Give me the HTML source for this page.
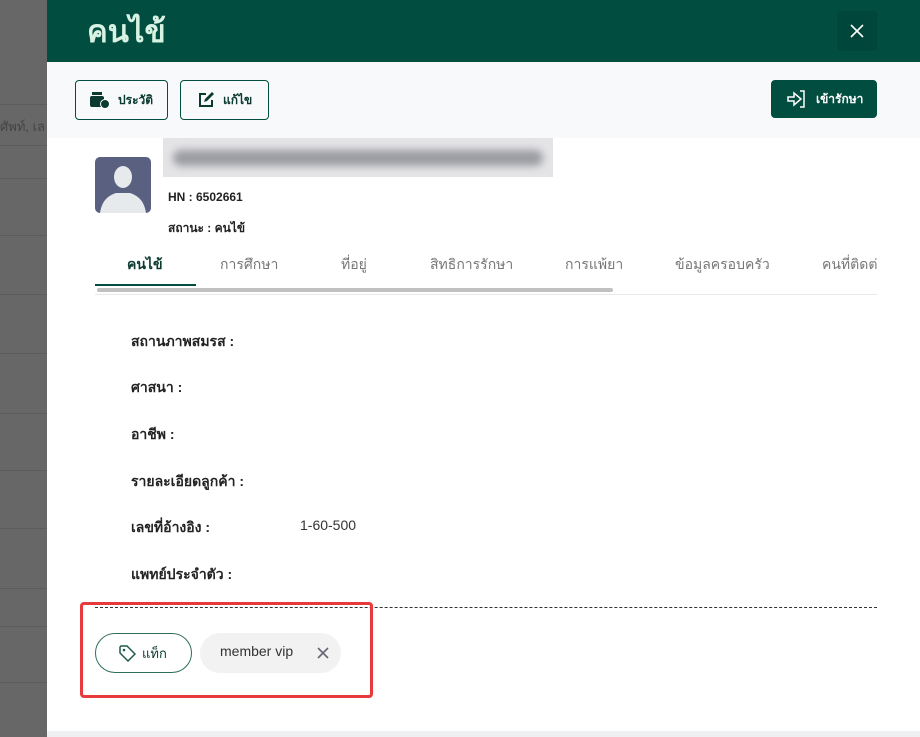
<!DOCTYPE html>
<html><head><meta charset="utf-8"><style>
*{box-sizing:border-box;margin:0;padding:0}
body{width:920px;height:737px;overflow:hidden;position:relative;background:#fff;font-family:"Liberation Sans","Noto Sans CJK SC",sans-serif}
.ov{position:absolute;left:0;top:0;width:47px;height:737px;background:#676767}
.ov div{position:absolute;left:0;width:47px;height:1px;background:#5c5c5c}
.panel{position:absolute;left:47px;top:0;width:873px;height:731px;background:#fff}
.hdr{position:absolute;left:0;top:0;width:873px;height:62px;background:#014d3f}
.hdr h1{position:absolute;left:40px;top:14px;color:#d8f3e4;font-size:31px;font-weight:bold;line-height:36px}
.close{position:absolute;left:790px;top:11px;width:40px;height:40px;background:#01463a;border-radius:3px}
.bar{position:absolute;left:0;top:62px;width:873px;height:76px;background:#f8f9fa}
.btn{position:absolute;top:18px;height:40px;border:1px solid #014d3f;border-radius:4px;font-size:12px;font-weight:bold;color:#0a3a30;display:flex;align-items:center;gap:8px;padding-left:14px}
.lbl{position:absolute;left:84px;font-size:14px;font-weight:bold;color:#222}
.tab{position:absolute;top:254px;font-size:14px;color:#777}
</style></head><body>
<div class="ov"><div style="top:104px"></div><div style="top:145px"></div><div style="top:178px"></div><div style="top:235px"></div><div style="top:294px"></div><div style="top:353px"></div><div style="top:413px"></div><div style="top:470px"></div><div style="top:528px"></div><div style="top:588px"></div><div style="top:626px"></div><div style="top:682px"></div>
<span style="position:absolute;left:0;top:116px;color:#444;font-size:13px;white-space:nowrap">ศัพท์, เล</span></div>
<div class="panel">
<div class="hdr"><h1>คนไข้</h1>
<div class="close"><svg width="40" height="40"><path d="M14 14L26 26M26 14L14 26" stroke="#fff" stroke-width="1.6"/></svg></div></div>
<div class="bar">
<div class="btn" style="left:28px;width:93px"><svg width="20" height="18"><rect x="0" y="5" width="14" height="11" rx="2" fill="#0a3a30"/><rect x="2" y="1" width="10" height="3" fill="#0a3a30"/><circle cx="15" cy="13" r="4.5" fill="#0a3a30" stroke="#fff" stroke-width="1"/></svg>ประวัติ</div>
<div class="btn" style="left:133px;width:89px;padding-left:16px"><svg width="18" height="18"><path d="M9 3H3v12h12V9" fill="none" stroke="#0a3a30" stroke-width="2"/><path d="M7 11l1-3 7-7 2 2-7 7z" fill="#0a3a30"/></svg>แก้ไข</div>
<div class="btn" style="left:724px;top:18px;width:106px;height:38px;background:#014d3f;color:#fff;padding-left:14px"><svg width="22" height="20"><path d="M2 8h6V4l7 6-7 6v-4H2z" fill="none" stroke="#fff" stroke-width="1.5"/><path d="M14 2h4v16h-4" fill="none" stroke="#fff" stroke-width="1.5"/></svg>เข้ารักษา</div>
</div>
<div style="position:absolute;left:116px;top:138px;width:390px;height:39px;background:#e4e4e6;filter:blur(0px)"><div style="position:absolute;left:10px;top:12px;width:370px;height:16px;background:#9b9ca2;border-radius:8px;filter:blur(4px)"></div></div>
<div style="position:absolute;left:48px;top:157px;width:56px;height:56px;background:#5a6080;border-radius:5px;overflow:hidden"><svg width="56" height="56"><ellipse cx="28" cy="20" rx="9" ry="11" fill="#e6eaed"/><path d="M5 56c2-14 10-18 16-20h14c6 2 14 6 16 20z" fill="#e6eaed"/></svg></div>
<div style="position:absolute;left:121px;top:190px;font-size:12px;font-weight:bold;color:#222">HN : 6502661</div>
<div style="position:absolute;left:121px;top:219px;font-size:12px;font-weight:bold;color:#222">สถานะ : คนไข้</div>
<div class="tab" style="left:80px;color:#0a3a30;font-weight:bold">คนไข้</div>
<div class="tab" style="left:173px">การศึกษา</div>
<div class="tab" style="left:294px">ที่อยู่</div>
<div class="tab" style="left:383px">สิทธิการรักษา</div>
<div class="tab" style="left:518px">การแพ้ยา</div>
<div class="tab" style="left:628px">ข้อมูลครอบครัว</div>
<div class="tab" style="left:775px;width:56px;overflow:hidden;white-space:nowrap">คนที่ติดต่อ</div>
<div style="position:absolute;left:48px;top:284px;width:101px;height:2px;background:#014d3f"></div>
<div style="position:absolute;left:50px;top:288px;width:516px;height:4px;background:#c1c1c1;border-radius:2px"></div>
<div style="position:absolute;left:48px;top:294px;width:782px;height:1px;background:#e8e8e8"></div>
<div class="lbl" style="top:331px">สถานภาพสมรส :</div>
<div class="lbl" style="top:377px">ศาสนา :</div>
<div class="lbl" style="top:424px">อาชีพ :</div>
<div class="lbl" style="top:471px">รายละเอียดลูกค้า :</div>
<div class="lbl" style="top:517px">เลขที่อ้างอิง :</div>
<div style="position:absolute;left:253px;top:517px;font-size:14px;color:#333">1-60-500</div>
<div class="lbl" style="top:564px">แพทย์ประจำตัว :</div>
<div style="position:absolute;left:48px;top:607px;width:782px;border-top:1px dashed #333"></div>
<div style="position:absolute;left:48px;top:633px;width:97px;height:40px;border:1px solid #2d6d5c;border-radius:20px;display:flex;align-items:center;padding-left:22px;gap:6px;font-size:13px;color:#0a3a30"><svg width="18" height="18"><path d="M2 3v6l8 8 7-7-8-8H3z" fill="none" stroke="#1d5a4c" stroke-width="1.5"/><circle cx="6" cy="6" r="1.3" fill="#1d5a4c"/></svg>แท็ก</div>
<div style="position:absolute;left:153px;top:633px;width:141px;height:40px;background:#f2f2f3;border-radius:20px;font-size:14px;color:#333;padding:10px 0 0 20px">member vip<svg style="position:absolute;left:116px;top:13px" width="14" height="14"><path d="M2 2L12 12M12 2L2 12" stroke="#667" stroke-width="1.6"/></svg></div>
<div style="position:absolute;left:33px;top:602px;width:293px;height:96px;border:3px solid #e83a3a;border-radius:4px"></div>
</div>
<div style="position:absolute;left:47px;top:731px;width:873px;height:6px;background:#eef0f2"></div>
</body></html>
